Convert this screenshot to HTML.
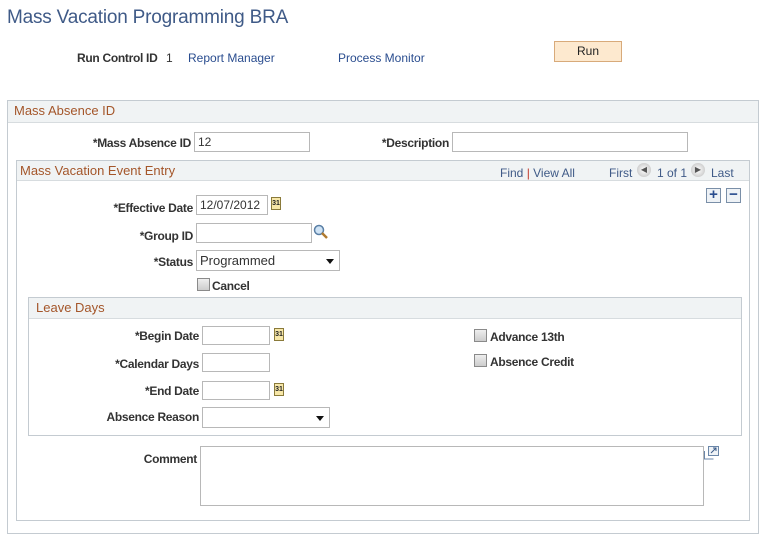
<!DOCTYPE html>
<html><head><meta charset="utf-8"><style>
*{box-sizing:border-box}
body{margin:0;width:766px;height:542px;background:#fff;font-family:"Liberation Sans",Arial,sans-serif;font-size:12px;color:#333;position:relative;overflow:hidden}
.a{position:absolute}
.lbl{position:absolute;font-weight:bold;color:#333;text-align:right;white-space:nowrap;letter-spacing:-0.3px}
.lnk{position:absolute;color:#2a4d8f;white-space:nowrap}
.in{position:absolute;border:1px solid #b8b8b8;background:#fff;height:20px;font-size:12px;padding:2px 3px;color:#333}
.box{position:absolute;border:1px solid #c4cbd1}
.hdr{position:absolute;left:0;right:0;top:0;background:#f0f3f4;border-bottom:1px solid #d7dcdf;color:#a4562a;font-size:13px;padding:2px 0 0 6px}
.cal{position:absolute;width:10px;height:13px;background:#f7e7a8;border:1px solid #8a7a3a;font-size:7px;font-weight:bold;line-height:11px;text-align:center;color:#222}
.cb{position:absolute;width:13px;height:13px;border:1px solid #8a8a8a;background:linear-gradient(#eee,#ccc)}
.dd{position:absolute;width:0;height:0;border-left:4px solid transparent;border-right:4px solid transparent;border-top:5px solid #111}
</style></head><body>
<div class="a" style="left:7px;top:7px;font-size:19px;color:#3f5a87;letter-spacing:-0.2px">Mass Vacation Programming BRA</div>
<div class="lbl" style="left:77px;top:51px">Run Control ID</div>
<div class="a" style="left:166px;top:51px">1</div>
<div class="lnk" style="left:188px;top:51px">Report Manager</div>
<div class="lnk" style="left:338px;top:51px">Process Monitor</div>
<div class="a" style="left:554px;top:41px;width:68px;height:21px;background:#fde9cf;border:1px solid #d8aa7a;text-align:center;line-height:19px;color:#222">Run</div>

<div class="box" style="left:7px;top:100px;width:752px;height:434px">
 <div class="hdr" style="height:22px">Mass Absence ID</div>
</div>
<div class="lbl" style="left:60px;top:136px;width:131px">*Mass Absence ID</div>
<div class="in" style="left:194px;top:132px;width:116px">12</div>
<div class="lbl" style="left:340px;top:136px;width:109px">*Description</div>
<div class="in" style="left:452px;top:132px;width:236px"></div>

<div class="box" style="left:16px;top:160px;width:734px;height:361px">
 <div class="hdr" style="height:20px;padding-left:3px">Mass Vacation Event Entry</div>
</div>
<div class="lnk" style="left:500px;top:166px;color:#3f5a87">Find <span style="color:#c0392b">|</span> View All</div>
<div class="a" style="left:609px;top:166px;color:#3f5a87">First</div>
<div class="a" style="left:637px;top:163px;width:14px;height:14px;border-radius:50%;background:radial-gradient(#fff,#bbb);font-size:8px;text-align:center;line-height:14px;color:#555">◀</div>
<div class="a" style="left:657px;top:166px;color:#3f5a87">1 of 1</div>
<div class="a" style="left:691px;top:163px;width:14px;height:14px;border-radius:50%;background:radial-gradient(#fff,#bbb);font-size:8px;text-align:center;line-height:14px;color:#555">▶</div>
<div class="a" style="left:711px;top:166px;color:#3f5a87">Last</div>
<div class="a" style="left:706px;top:188px;width:15px;height:15px;border:1px solid #7a8fa8;background:#eef2f6;color:#2a4d8f;font-weight:bold;text-align:center;line-height:12px;font-size:15px">+</div>
<div class="a" style="left:726px;top:188px;width:15px;height:15px;border:1px solid #7a8fa8;background:#eef2f6;color:#2a4d8f;font-weight:bold;text-align:center;line-height:12px;font-size:15px">−</div>

<div class="lbl" style="left:60px;top:201px;width:133px">*Effective Date</div>
<div class="in" style="left:196px;top:195px;width:72px">12/07/2012</div>
<div class="cal" style="left:271px;top:197px">31</div>
<div class="lbl" style="left:60px;top:229px;width:133px">*Group ID</div>
<div class="in" style="left:196px;top:223px;width:116px"></div>
<svg class="a" style="left:313px;top:224px" width="15" height="15"><circle cx="6" cy="6" r="4.5" fill="#cfe3f5" stroke="#5a7fa5" stroke-width="1.5"/><line x1="9" y1="9" x2="14" y2="14" stroke="#b07a30" stroke-width="2.5"/></svg>
<div class="lbl" style="left:60px;top:255px;width:133px">*Status</div>
<div class="in" style="left:196px;top:250px;width:144px;height:21px;font-size:13px;padding-top:2px">Programmed</div>
<div class="dd" style="left:326px;top:259px"></div>
<div class="cb" style="left:197px;top:278px"></div>
<div class="lbl" style="left:212px;top:279px">Cancel</div>

<div class="box" style="left:28px;top:297px;width:714px;height:139px">
 <div class="hdr" style="height:21px;padding-left:7px">Leave Days</div>
</div>
<div class="lbl" style="left:60px;top:329px;width:139px">*Begin Date</div>
<div class="in" style="left:202px;top:326px;width:68px;height:19px"></div>
<div class="cal" style="left:274px;top:328px">31</div>
<div class="lbl" style="left:60px;top:357px;width:139px">*Calendar Days</div>
<div class="in" style="left:202px;top:353px;width:68px;height:19px"></div>
<div class="lbl" style="left:60px;top:384px;width:139px">*End Date</div>
<div class="in" style="left:202px;top:381px;width:68px;height:19px"></div>
<div class="cal" style="left:274px;top:383px">31</div>
<div class="lbl" style="left:60px;top:410px;width:139px">Absence Reason</div>
<div class="in" style="left:202px;top:407px;width:128px;height:21px"></div>
<div class="dd" style="left:316px;top:416px"></div>
<div class="cb" style="left:474px;top:329px"></div>
<div class="lbl" style="left:490px;top:330px">Advance 13th</div>
<div class="cb" style="left:474px;top:354px"></div>
<div class="lbl" style="left:490px;top:355px">Absence Credit</div>

<div class="lbl" style="left:60px;top:452px;width:137px">Comment</div>
<div class="in" style="left:200px;top:446px;width:504px;height:60px"></div>
<svg class="a" style="left:704px;top:446px" width="16" height="14"><rect x="4.5" y="0.5" width="10" height="9" fill="#eef2f6" stroke="#6a86a8"/><path d="M0.5 5v8h9" fill="none" stroke="#6a86a8"/><path d="M7 7l5-5M9 2h3v3" fill="none" stroke="#3a5a88"/></svg>
</body></html>
